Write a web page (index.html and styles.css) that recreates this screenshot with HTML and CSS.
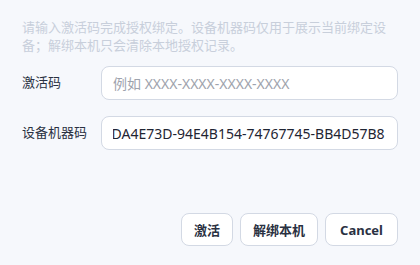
FILE: index.html
```html
<!DOCTYPE html>
<html lang="zh-CN">
<head>
  <meta charset="UTF-8">
  <meta name="viewport" content="width=device-width, initial-scale=1.0">
  <title>授权绑定</title>
  <link rel="stylesheet" href="styles.css">
</head>
<body>
  <div class="dialog">
    <!-- Подсказка -->
    <p class="hint">请输入激活码完成授权绑定。设备机器码仅用于展示当前绑定设备；解绑本机只会清除本地授权记录。</p>

    <!-- Поля -->
    <div class="form">
      <label class="form-label" for="code">激活码</label>
      <input class="form-input" id="code" type="text" placeholder="例如 XXXX-XXXX-XXXX-XXXX">

      <label class="form-label" for="machine">设备机器码</label>
      <input class="form-input" id="machine" type="text" readonly value="5F1C2A09-83DA4E73D-94E4B154-74767745-BB4D57B8">
    </div>

    <!-- Кнопки -->
    <div class="actions">
      <button class="btn">激活</button>
      <button class="btn">解绑本机</button>
      <button class="btn btn-cancel">Cancel</button>
    </div>
  </div>

  <script>
    // показываем конец машинного кода
    const machine = document.getElementById('machine');
    machine.scrollLeft = machine.scrollWidth;
  </script>
</body>
</html>
```

FILE: styles.css
```css
body {
  margin: 0;
  padding: 0;
  background-color: #f6f8fc;
  font-family: "Noto Sans", "Noto Sans CJK SC", sans-serif;
  color: #2a3142;
}

.dialog {
  padding: 18px 22px 19px 22px;
  height: 265px;
  box-sizing: border-box;
  display: flex;
  flex-direction: column;
}

/* Подсказка */
.hint {
  margin: 0;
  font-size: 13px;
  line-height: 18px;
  color: #c8cfdb;
}

/* Форма */
.form {
  margin-top: 12px;
  display: grid;
  grid-template-columns: 79px 1fr;
  row-gap: 16px;
  align-items: center;
}

.form-label {
  font-size: 13px;
  color: #2a3142;
  padding-bottom: 4px;
}

.form-input {
  height: 34px;
  box-sizing: border-box;
  width: 100%;
  padding: 0 12px 0 11px;
  border: 1px solid #d3d9e4;
  border-radius: 8px;
  background-color: #ffffff;
  font-family: inherit;
  font-size: 14px;
  color: #1f2533;
  outline: none;
}

.form-input::placeholder {
  color: #9ea3ad;
}

/* Кнопки */
.actions {
  margin-top: auto;
  display: flex;
  justify-content: flex-end;
  gap: 7px;
}

.btn {
  height: 33px;
  padding: 0 12px;
  border: 1px solid #d3d9e4;
  border-radius: 8px;
  background-color: #ffffff;
  font-family: inherit;
  font-size: 13px;
  font-weight: 700;
  color: #2a3142;
  cursor: pointer;
}

.btn-cancel {
  padding: 0 14px;
}
```
